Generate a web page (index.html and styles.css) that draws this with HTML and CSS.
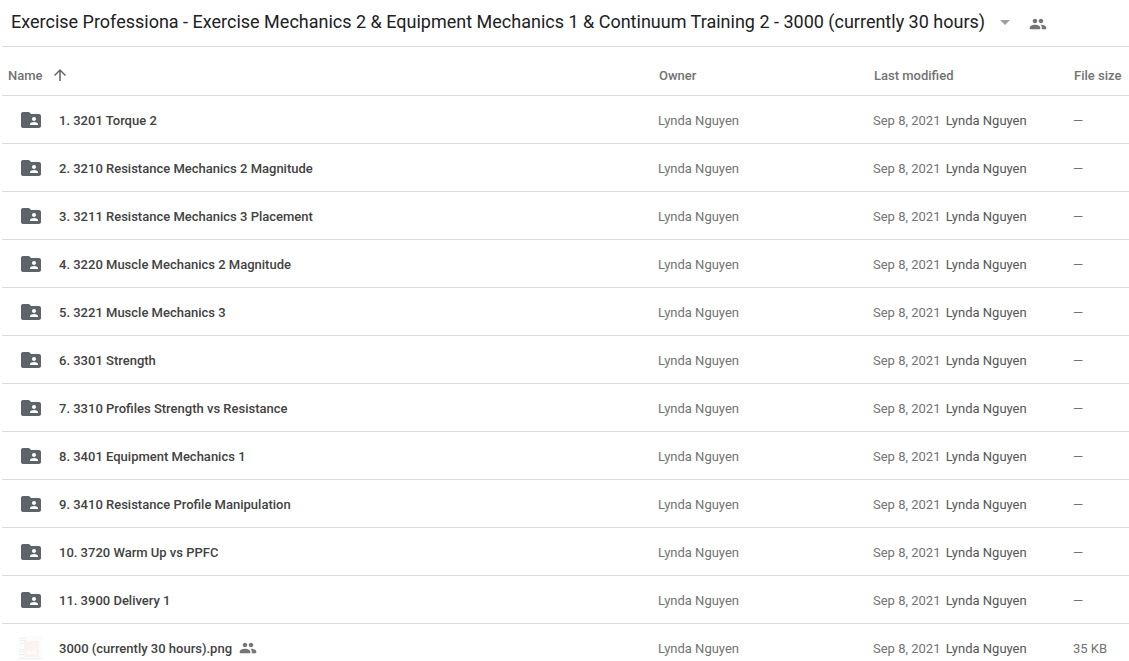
FILE: index.html
```
<!DOCTYPE html>
<html lang="en">
<head>
    <meta charset="UTF-8">
    <meta name="viewport" content="width=device-width, initial-scale=1.0">
    <title>Exercise Professiona - Drive</title>
    <link rel="stylesheet" href="styles.css">
</head>
<body>
    <!-- Shared icons -->
    <svg class="icon-defs" aria-hidden="true">
        <symbol id="icon-people" viewBox="0 0 24 24">
            <path d="M16 11c1.660 0 2.990-1.340 2.990-3S17.660 5 16 5c-1.660 0-3 1.340-3 3s1.340 3 3 3zm-8 0c1.660 0 2.990-1.340 2.990-3S9.660 5 8 5C6.340 5 5 6.340 5 8s1.340 3 3 3zm0 2c-2.330 0-7 1.170-7 3.500V19h14v-2.500c0-2.330-4.670-3.500-7-3.500zm8 0c-.290 0-.620.020-.970.050 1.160.840 1.970 1.970 1.970 3.450V19h6v-2.500c0-2.330-4.670-3.500-7-3.500z"/>
        </symbol>
        <symbol id="icon-folder" viewBox="0 0 24 24">
            <path d="M20 6h-8l-2-2H4c-1.100 0-1.990.900-1.990 2L2 18c0 1.100.900 2 2 2h16c1.100 0 2-.900 2-2V8c0-1.100-.900-2-2-2zm-5 3c1.100 0 2 .900 2 2s-.900 2-2 2-2-.900-2-2 .900-2 2-2zm4 8h-8v-1c0-1.330 2.670-2 4-2s4 .670 4 2v1z"/>
        </symbol>
    </svg>

    <header class="title-bar">
        <h1>
            <button class="title-btn" type="button">
                Exercise Professiona - Exercise Mechanics 2 &amp; Equipment Mechanics 1 &amp; Continuum Training 2 - 3000 (currently 30 hours)
                <svg class="caret" viewBox="0 0 10 5" aria-hidden="true"><path d="M0 0h10L5 5z"/></svg>
            </button>
        </h1>
        <button class="share-btn" type="button" aria-label="Manage access">
            <svg class="people" aria-hidden="true"><use href="#icon-people"/></svg>
        </button>
    </header>

    <main class="file-list">
        <table>
            <thead>
                <tr>
                    <th class="col-name">
                        <button class="sort-btn" type="button">
                            Name
                            <svg class="arrow" viewBox="0 0 24 24" aria-hidden="true"><path d="M4 12l1.410 1.410L11 7.830V20h2V7.830l5.580 5.590L20 12l-8-8-8 8z"/></svg>
                        </button>
                    </th>
                    <th class="col-owner">Owner</th>
                    <th class="col-modified">Last modified</th>
                    <th class="col-size">File size</th>
                </tr>
            </thead>
            <tbody>
                <tr>
                    <td><div class="file"><svg class="folder" aria-hidden="true"><use href="#icon-folder"/></svg>1. 3201 Torque 2</div></td>
                    <td>Lynda Nguyen</td>
                    <td>Sep 8, 2021 <span class="editor">Lynda Nguyen</span></td>
                    <td>—</td>
                </tr>
                <tr>
                    <td><div class="file"><svg class="folder" aria-hidden="true"><use href="#icon-folder"/></svg>2. 3210 Resistance Mechanics 2 Magnitude</div></td>
                    <td>Lynda Nguyen</td>
                    <td>Sep 8, 2021 <span class="editor">Lynda Nguyen</span></td>
                    <td>—</td>
                </tr>
                <tr>
                    <td><div class="file"><svg class="folder" aria-hidden="true"><use href="#icon-folder"/></svg>3. 3211 Resistance Mechanics 3 Placement</div></td>
                    <td>Lynda Nguyen</td>
                    <td>Sep 8, 2021 <span class="editor">Lynda Nguyen</span></td>
                    <td>—</td>
                </tr>
                <tr>
                    <td><div class="file"><svg class="folder" aria-hidden="true"><use href="#icon-folder"/></svg>4. 3220 Muscle Mechanics 2 Magnitude</div></td>
                    <td>Lynda Nguyen</td>
                    <td>Sep 8, 2021 <span class="editor">Lynda Nguyen</span></td>
                    <td>—</td>
                </tr>
                <tr>
                    <td><div class="file"><svg class="folder" aria-hidden="true"><use href="#icon-folder"/></svg>5. 3221 Muscle Mechanics 3</div></td>
                    <td>Lynda Nguyen</td>
                    <td>Sep 8, 2021 <span class="editor">Lynda Nguyen</span></td>
                    <td>—</td>
                </tr>
                <tr>
                    <td><div class="file"><svg class="folder" aria-hidden="true"><use href="#icon-folder"/></svg>6. 3301 Strength</div></td>
                    <td>Lynda Nguyen</td>
                    <td>Sep 8, 2021 <span class="editor">Lynda Nguyen</span></td>
                    <td>—</td>
                </tr>
                <tr>
                    <td><div class="file"><svg class="folder" aria-hidden="true"><use href="#icon-folder"/></svg>7. 3310 Profiles Strength vs Resistance</div></td>
                    <td>Lynda Nguyen</td>
                    <td>Sep 8, 2021 <span class="editor">Lynda Nguyen</span></td>
                    <td>—</td>
                </tr>
                <tr>
                    <td><div class="file"><svg class="folder" aria-hidden="true"><use href="#icon-folder"/></svg>8. 3401 Equipment Mechanics 1</div></td>
                    <td>Lynda Nguyen</td>
                    <td>Sep 8, 2021 <span class="editor">Lynda Nguyen</span></td>
                    <td>—</td>
                </tr>
                <tr>
                    <td><div class="file"><svg class="folder" aria-hidden="true"><use href="#icon-folder"/></svg>9. 3410 Resistance Profile Manipulation</div></td>
                    <td>Lynda Nguyen</td>
                    <td>Sep 8, 2021 <span class="editor">Lynda Nguyen</span></td>
                    <td>—</td>
                </tr>
                <tr>
                    <td><div class="file"><svg class="folder" aria-hidden="true"><use href="#icon-folder"/></svg>10. 3720 Warm Up vs PPFC</div></td>
                    <td>Lynda Nguyen</td>
                    <td>Sep 8, 2021 <span class="editor">Lynda Nguyen</span></td>
                    <td>—</td>
                </tr>
                <tr>
                    <td><div class="file"><svg class="folder" aria-hidden="true"><use href="#icon-folder"/></svg>11. 3900 Delivery 1</div></td>
                    <td>Lynda Nguyen</td>
                    <td>Sep 8, 2021 <span class="editor">Lynda Nguyen</span></td>
                    <td>—</td>
                </tr>
                <tr>
                    <td>
                        <div class="file">
                            <svg class="thumb" viewBox="0 0 24 24" aria-hidden="true">
                                <path fill="#fcfcfc" d="M0 0h24v24H0z"/>
                                <path stroke="#f1f1f1" d="M0 2.500h8M0 4.500h7M1 7.500h5M0 13.500h6M0 15.500h5M0 18.500h5M0 22.500h24"/>
                                <path fill="#fcf3f1" d="M5 5h15v16H5z"/>
                                <path fill="#fff" d="M7 18l3-4 2 2 3-3 3 5z"/>
                            </svg>
                            3000 (currently 30 hours).png
                            <svg class="people" role="img" aria-label="Shared"><use href="#icon-people"/></svg>
                        </div>
                    </td>
                    <td>Lynda Nguyen</td>
                    <td>Sep 8, 2021 <span class="editor">Lynda Nguyen</span></td>
                    <td>35 KB</td>
                </tr>
            </tbody>
        </table>
    </main>
</body>
</html>
```
FILE: styles.css
```
body {
    display: flex;
    flex-direction: column;
    height: 100vh;
    margin: 0;
    overflow: hidden;
    background-color: #fff;
    font-family: Roboto, Arial, sans-serif;
    font-size: 13px;
    color: #737373;
}
button {
    padding: 0;
    border: none;
    background: none;
    font: inherit;
    color: inherit;
    cursor: pointer;
}
svg {
    flex: none;
    fill: currentColor;
}
.icon-defs {
    display: none;
}
.title-bar {
    display: flex;
    align-items: center;
    gap: 19px;
    height: 42px;
    flex: none;
    margin-left: 2px;
    padding: 0 0 4px 9px;
    border-bottom: 1px solid #dadce0;
}
h1 {
    margin: 0;
    font-family: "Google Sans", Roboto, sans-serif;
    font-size: 18px;
    font-weight: 400;
    color: #202124;
}
.title-btn {
    display: flex;
    align-items: center;
    gap: 15px;
    white-space: nowrap;
}
.caret {
    width: 10px;
    height: 5px;
    margin-top: 2px;
    color: #9aa0a6;
}
.people {
    width: 18px;
    height: 18px;
    color: #757575;
}
.share-btn {
    display: flex;
    padding-top: 6px;
}
.file-list {
    flex: 1;
    min-height: 0;
    margin-left: 2px;
    overflow: hidden;
}
table {
    width: 100%;
    table-layout: fixed;
    border-collapse: separate;
    border-spacing: 0;
}
th, td {
    box-sizing: border-box;
    height: 48px;
    padding: 2px 0 0;
    border-bottom: 1px solid #dadce0;
    text-align: left;
    white-space: nowrap;
}
th {
    height: 49px;
    padding: 8px 0 0 1px;
    font-weight: 500;
}
.col-name {
    padding-left: 6px;
}
.col-owner {
    width: 215px;
}
.col-modified {
    width: 200px;
}
.col-size {
    width: 56px;
}
.sort-btn {
    display: flex;
    align-items: center;
    gap: 8px;
}
.arrow {
    width: 18px;
    height: 18px;
    color: #5f6368;
}
.file {
    display: flex;
    align-items: center;
    padding-left: 17px;
    font-weight: 500;
    color: #424242;
}
.folder, .thumb {
    width: 24px;
    height: 24px;
    margin: 0 16px 2px 0;
}
.folder {
    color: #5f6368;
}
.file .people {
    margin: 0 0 2px 7px;
}
.editor {
    margin-left: 2px;
    color: #555;
}
```
